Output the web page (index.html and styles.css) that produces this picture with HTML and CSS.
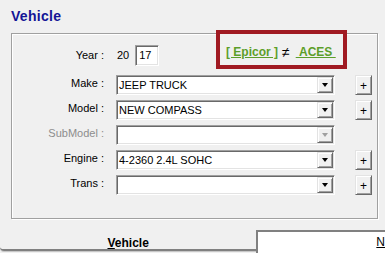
FILE: index.html
```html
<!DOCTYPE html>
<html lang="en">
<head>
  <meta charset="UTF-8">
  <title>Vehicle</title>
  <link rel="stylesheet" href="styles.css">
</head>
<body>
  <div class="window">
    <div class="page">
      <h1 class="title">Vehicle</h1>

      <div class="group">
        <!-- annotation box drawn over the group frame -->
        <div class="ref-note">
          <a class="ref-link" href="#">[ Epicor ]</a>
          <span class="neq">&ne;</span>
          <a class="ref-link" href="#">&nbsp;ACES&nbsp;</a>
        </div>

        <div class="row row-year">
          <span class="field-label">Year :</span>
          <span class="century">20</span>
          <span class="textbox">17</span>
        </div>

        <div class="row">
          <span class="field-label">Make :</span>
          <div class="combo">
            <span class="combo-text">JEEP TRUCK</span>
            <span class="combo-btn"><span class="arrow"></span></span>
          </div>
          <span class="plus-btn">+</span>
        </div>

        <div class="row">
          <span class="field-label">Model :</span>
          <div class="combo">
            <span class="combo-text">NEW COMPASS</span>
            <span class="combo-btn"><span class="arrow"></span></span>
          </div>
          <span class="plus-btn">+</span>
        </div>

        <div class="row">
          <span class="field-label disabled">SubModel :</span>
          <div class="combo">
            <span class="combo-text"></span>
            <span class="combo-btn disabled"><span class="arrow"></span></span>
          </div>
        </div>

        <div class="row">
          <span class="field-label">Engine :</span>
          <div class="combo">
            <span class="combo-text">4-2360 2.4L SOHC</span>
            <span class="combo-btn"><span class="arrow"></span></span>
          </div>
          <span class="plus-btn">+</span>
        </div>

        <div class="row">
          <span class="field-label">Trans :</span>
          <div class="combo">
            <span class="combo-text"></span>
            <span class="combo-btn"><span class="arrow"></span></span>
          </div>
          <span class="plus-btn">+</span>
        </div>
      </div>
    </div>

    <div class="tabstrip">
      <div class="tab tab-active"><u>V</u>ehicle</div>
      <div class="tab tab-other"><u>N</u></div>
    </div>
  </div>
</body>
</html>
```

FILE: styles.css
```css
html, body {
  margin: 0;
  padding: 0;
  overflow: hidden;
}

body {
  background-color: #f0f0f0;
  font-family: 'Liberation Sans', Arial, sans-serif;
  font-size: 11px;
  color: #000;
}

.window {
  width: 385px;
  height: 253px;
  display: flex;
  flex-direction: column;
}

.page {
  height: 230px;
  box-sizing: border-box;
  padding: 8px 0 0 11px;
}

.title {
  margin: 0 0 9px 0;
  font-size: 14px;
  line-height: 16px;
  font-weight: bold;
  letter-spacing: 0.3px;
  color: #141496;
}

.group {
  position: relative;
  width: 367px;
  height: 186px;
  box-sizing: border-box;
  border: 1px solid #a0a0a0;
  box-shadow: inset 1px 1px 0 #fff, 1px 1px 0 #fff;
  padding-top: 11px;
  display: flex;
  flex-direction: column;
  gap: 5px;
}

.ref-note {
  position: absolute;
  left: 204px;
  top: -4px;
  width: 131px;
  height: 39px;
  box-sizing: border-box;
  border: 4px solid #a01a22;
  background-color: #f0f0f0;
  padding: 11px 0 0 6px;
  display: flex;
  font-size: 12px;
  line-height: 14px;
  font-weight: bold;
}

.ref-link {
  color: #5c9e29;
  text-decoration: underline;
}

.neq {
  margin: 0 6px 0 4px;
  font-size: 14px;
  font-weight: normal;
}

.row {
  display: flex;
  align-items: flex-start;
  height: 20px;
}

.row-year {
  height: 21px;
  margin-bottom: 4px;
}

.field-label {
  width: 92px;
  margin-right: 12px;
  text-align: right;
  line-height: 16px;
}

.field-label.disabled {
  color: #8d8d8d;
}

.row-year .field-label,
.century {
  padding-top: 2px;
  line-height: 16px;
}

.century {
  padding-left: 1px;
  margin-right: 6px;
}

.textbox {
  width: 24px;
  height: 21px;
  box-sizing: border-box;
  padding: 1px 0 0 3px;
  line-height: 16px;
  background-color: #fff;
  border: 1px solid;
  border-color: #a0a0a0 #fff #fff #a0a0a0;
  box-shadow: inset 1px 1px 0 #696969, inset -1px -1px 0 #e3e3e3;
}

.combo {
  width: 219px;
  height: 20px;
  box-sizing: border-box;
  padding: 1px;
  display: flex;
  background-color: #fff;
  border: 1px solid;
  border-color: #a0a0a0 #fff #fff #a0a0a0;
  box-shadow: inset 1px 1px 0 #696969, inset -1px -1px 0 #e3e3e3;
}

.combo-text {
  flex: 1;
  padding-left: 1px;
  line-height: 16px;
  white-space: nowrap;
  overflow: hidden;
}

.combo-btn,
.plus-btn {
  box-sizing: border-box;
  background-color: #f0f0f0;
  border: 1px solid;
  border-color: #e3e3e3 #696969 #696969 #e3e3e3;
  box-shadow: inset 1px 1px 0 #fff, inset -1px -1px 0 #a0a0a0;
  display: flex;
  align-items: center;
  justify-content: center;
}

.combo-btn {
  width: 16px;
  height: 16px;
}

.arrow {
  width: 0;
  height: 0;
  border-style: solid;
  border-width: 4px 3.5px 0 3.5px;
  border-color: #000 transparent transparent transparent;
}

.combo-btn.disabled .arrow {
  border-top-color: #a0a0a0;
}

.plus-btn {
  width: 17px;
  height: 20px;
  margin-left: 20px;
  padding-top: 2px;
  font-size: 12px;
}

.tabstrip {
  display: flex;
  height: 23px;
}

.tab {
  box-sizing: border-box;
  font-size: 12px;
  line-height: 12px;
  white-space: nowrap;
}

.tab-active {
  width: 257px;
  height: 21px;
  padding-top: 7px;
  text-align: center;
  font-weight: bold;
  border-bottom: 2px solid #808080;
  border-bottom-left-radius: 4px;
  box-shadow: 0 1px 0 #c8c8c8;
}

.tab-other {
  flex: 1;
  height: 23px;
  padding: 4px 0 0 118px;
  background-color: #fff;
  border-top: 2px solid #808080;
  border-left: 2px solid #808080;
}
```
